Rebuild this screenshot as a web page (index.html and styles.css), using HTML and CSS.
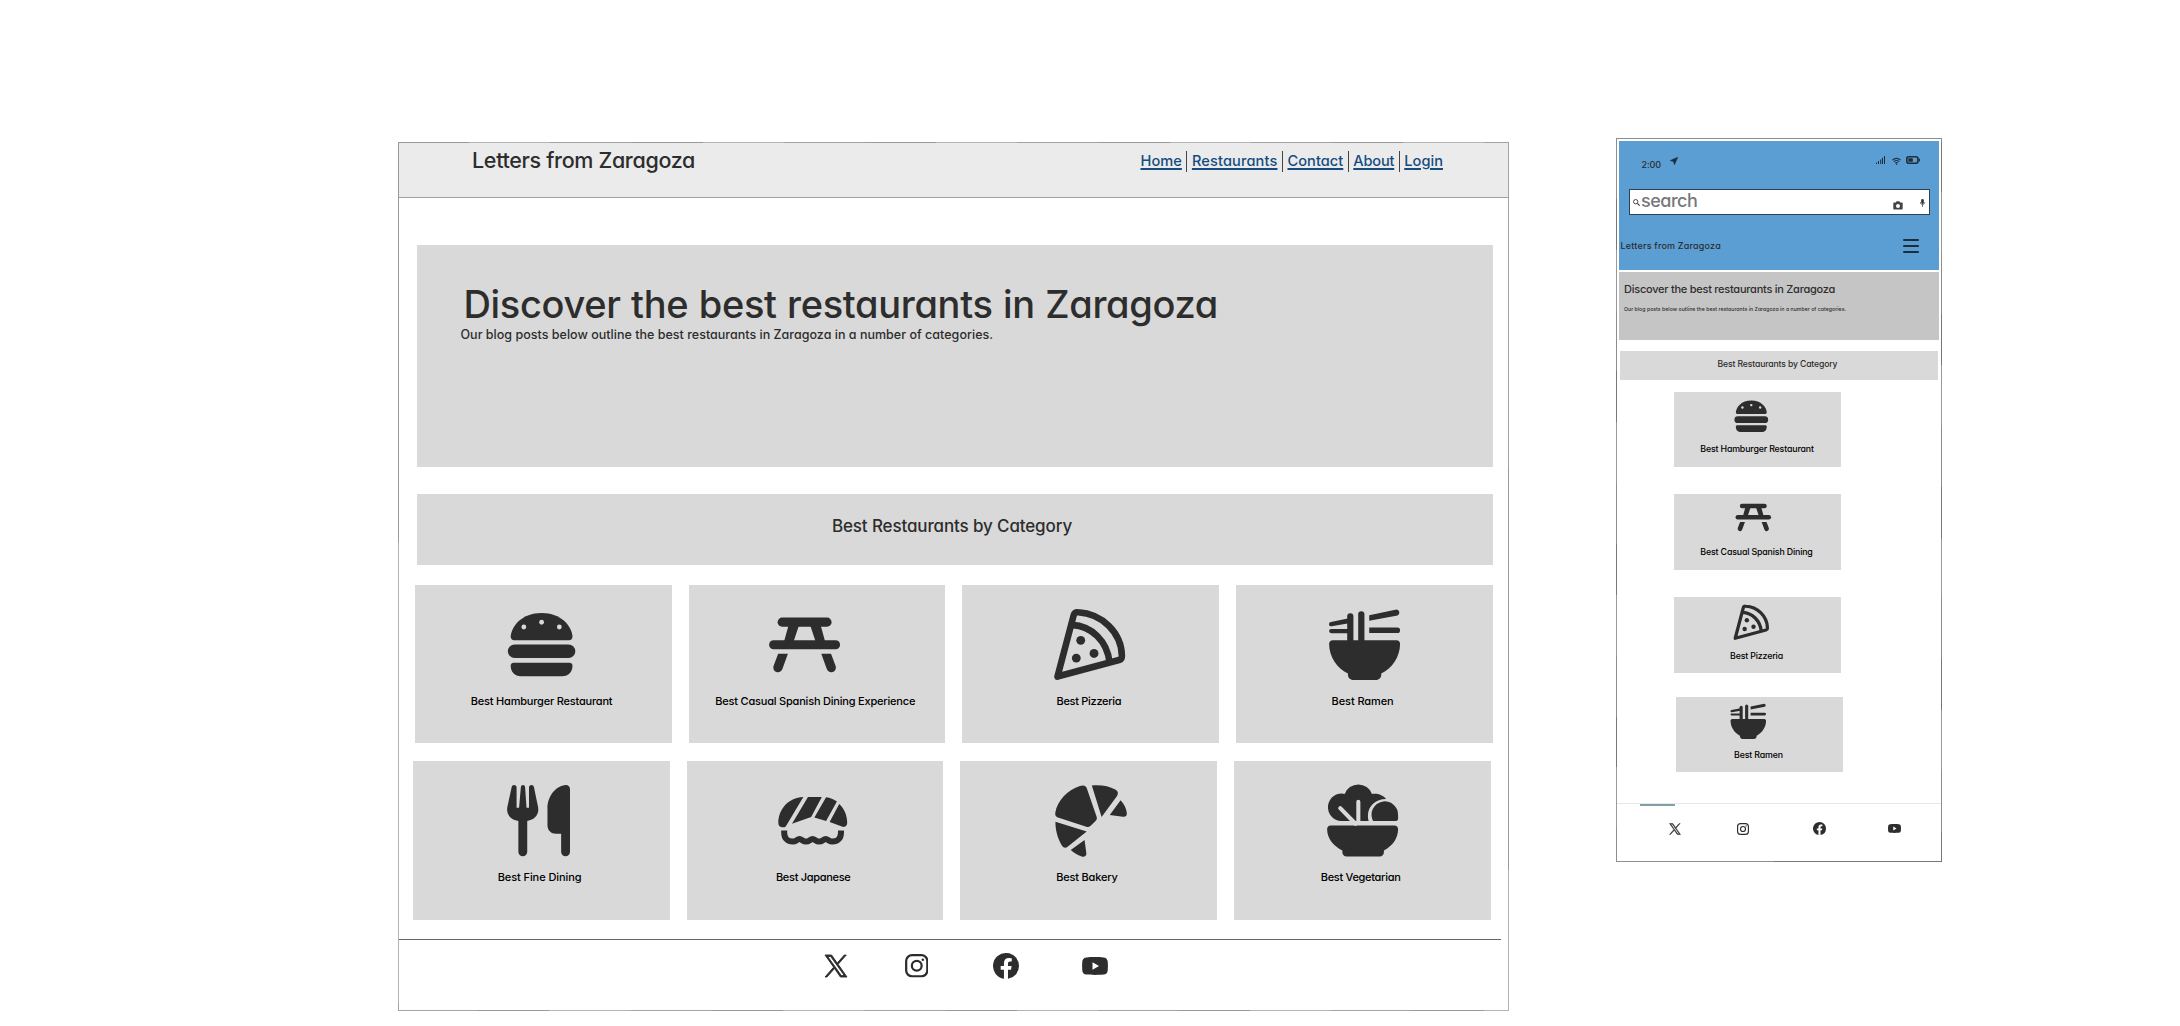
FILE: index.html
```html
<!DOCTYPE html>
<html lang="en">
<head>
<meta charset="utf-8">
<title>Letters from Zaragoza</title>
<link rel="stylesheet" href="styles.css">
</head>
<body>
<svg class="sprite" xmlns="http://www.w3.org/2000/svg">
  <symbol id="burger" viewBox="0 0 24 24">
    <path d="M12 3.1C6.5 3.1 3.5 6.8 3.3 9.7c0 .6.4 1.05.95 1.05h15.5c.55 0 .95-.45.95-1.05C20.5 6.8 17.5 3.1 12 3.1z"/>
    <rect x="2.5" y="12" width="19" height="3.8" rx="1.9"/>
    <path d="M4.1 17.1h15.8c.45 0 .8.35.8.8 0 1.9-1.1 3-2.9 3H6.2c-1.8 0-2.9-1.1-2.9-3 0-.45.35-.8.8-.8z"/>
    <g fill="#d9d9d9"><circle cx="7" cy="7.05" r=".68"/><circle cx="12" cy="5.7" r=".68"/><circle cx="17" cy="7.05" r=".68"/></g>
  </symbol>
  <symbol id="table" viewBox="0 0 24 24">
    <rect x="4.4" y="4.4" width="15.2" height="2.55" rx="1.27"/>
    <rect x="2" y="10.75" width="20" height="2.55" rx="1.27"/>
    <path d="M7.5 6.5h2.95L8.95 11h-2.7zM16.5 6.5h-2.95L15.05 11h2.7z"/>
    <path d="M4.55 14.6h2.75L5.75 18.9a1.3 1.3 0 0 1-2.5-.85zM19.45 14.6H16.7l1.55 4.3a1.3 1.3 0 0 0 2.5-.85z"/>
  </symbol>
  <symbol id="pizza" viewBox="0 0 24 24">
    <g fill="none" stroke="#2d2d2d" stroke-width="1.85" stroke-linejoin="round">
      <path d="M2.95 21L7.55 3.6c.2-.6.6-.75 1.2-.7C15.5 3.3 21 8.6 21.1 15.2c0 .6-.2.95-.8 1.15z"/>
      <path d="M7 6.45c5.6.3 10 4.6 10.6 10.5"/>
    </g>
    <circle cx="9.5" cy="10.8" r="1.25"/><circle cx="8.25" cy="15.8" r="1.25"/><circle cx="13.25" cy="14.5" r="1.25"/>
  </symbol>
  <symbol id="ramen" viewBox="0 0 24 24">
    <path d="M3 10.75h18c.55 0 1 .45 1 1 0 3.6-2.2 6.9-5.3 8.4v.3c0 .9-.65 1.55-1.5 1.55H8.8c-.85 0-1.5-.65-1.5-1.55v-.3C4.2 18.65 2 15.35 2 11.75c0-.55.45-1 1-1z"/>
    <rect x="7.1" y="3.2" width="1.75" height="8.5" rx=".87"/><rect x="10.2" y="2.6" width="1.75" height="9" rx=".87"/>
    <path d="M13.3 3.7l7.7-1.6a.9.9 0 0 1 .3 1.7l-8 1.5zM13.3 7.15h7.9a.8.8 0 0 1 0 1.6h-7.9z"/>
    <path d="M7.6 4.6l-5.1 1a.62.62 0 0 0 .2 1.25l4.9-.85zM7.6 7.6h-5a.6.6 0 0 0 0 1.2h5z"/>
  </symbol>
  <symbol id="cutlery" viewBox="0 0 24 24">
    <path d="M5.1 2c.4 0 .7.3.7.7v5.7h.7L7 2.6c.03-.35.28-.6.6-.6s.57.25.6.6l.4 5.8h.7V2.7c0-.4.3-.7.7-.7.35 0 .6.2.7.6l1.15 5.6c.4 2-.9 3.6-3.05 3.9v8.7a1.25 1.25 0 0 1-2.5 0v-8.7C4.1 11.8 2.8 10.2 3.2 8.2L4.4 2.6c.1-.4.35-.6.7-.6z"/>
    <path d="M20.85 3.2c0-.8-.55-1.3-1.35-1.2-3 .4-5 3.5-5 6.6v4.7c0 1.4 1 2.4 2.4 2.4h1.45v5.1a1.25 1.25 0 0 0 2.5 0z"/>
  </symbol>
  <symbol id="sushi" viewBox="0 0 24 24">
    <path d="M9.4 5.35C5 5.6 2.35 8.9 2.35 12.7c0 .7.4 1.15 1 1.15h.5c.4 0 .6-.2.75-.5z"/>
    <path d="M10.7 5.35h3.9L11.6 11l-5.4 1.9zM15.8 5.4c1.1.15 2.2.6 3.05 1.2L15.8 12.1l-3.3-1zM19.5 7.3c1.4 1.3 2.25 3.2 2.25 5.3 0 .8-.5 1.3-1.3 1.15L16.8 12.4z"/>
    <path fill="none" stroke="#2d2d2d" stroke-width="1.7" d="M4 14.8v.6C4 17 5 17.9 6.4 17.9c1 0 1.2-.7 1.9-.7s.9.7 1.85.7 1.15-.7 1.85-.7.9.7 1.85.7 1.15-.7 1.85-.7.9.7 1.9.7c1.4 0 2.4-.9 2.4-2.5v-.6"/>
  </symbol>
  <symbol id="croissant" viewBox="0 0 24 24">
    <path d="M8.8 2.3C5.6 3.4 2.6 6.3 2.05 9.8c-.1.7.15 1.1.75 1.3l8 2.6c.6.2.9.1 1.3-.3l1.3-1.3c.35-.35.45-.7.3-1.2L11 3.1c-.2-.9-.9-1.2-2.2-.8z"/>
    <path d="M12.35 2.1c2.4-.25 4.8.1 6.6 1.15.8.45.95 1.1.5 1.8L15.1 11zM20.45 6.3c1 1.1 1.6 2.3 1.75 3.5.1.8-.3 1.2-1.1 1.1l-3.7-.5zM2.1 12.3l8.8 2.8-5.3 4.2c-.6.5-1.2.45-1.65-.2C2.7 17 2.05 14.6 2.1 12.3zM10.3 17.5l.5 3.7c.1.7-.5 1.1-1.3.9-1.2-.3-2.2-1-3.1-1.8z"/>
  </symbol>
  <symbol id="salad" viewBox="0 0 24 24">
    <path d="M6 12.1a3.85 3.85 0 1 1 .95-7.6 4.1 4.1 0 0 1 7.7 0c1.7-.2 3.2.4 3.95 1.4-2.9 0-5.1 2-5.1 4.7 0 .6.05 1 .2 1.5z"/>
    <path d="M14.95 12.1a3.75 3.75 0 1 1 7.05-1.5v.9c0 .35-.25.6-.6.6z"/>
    <path d="M3 13.4h18c.55 0 1 .45 1 1 0 2.6-1.6 4.9-4 6v.5c0 .7-.5 1.2-1.2 1.2H7.5c-.7 0-1.2-.5-1.2-1.2v-.5C3.8 19.3 2 17 2 14.4c0-.55.45-1 1-1z"/>
    <path fill="none" stroke="#d9d9d9" stroke-width="1.15" stroke-linecap="round" d="M10.8 6.7v6M5.7 8.5l4.3 4.4"/>
  </symbol>
  <symbol id="x" viewBox="0 0 24 24">
    <path stroke="#2d2d2d" stroke-width=".9" d="M14.1 10.3L22.3 1h-2l-7.1 8.1L7.6 1H1l8.6 12.2L1 23h2l7.5-8.5L16.4 23H23zM3.7 2.5h3l13.6 19h-3z"/>
  </symbol>
  <symbol id="instagram" viewBox="0 0 24 24">
    <g fill="none" stroke="#2d2d2d" stroke-width="2.3"><rect x="1.2" y="1.2" width="21.6" height="21.6" rx="6"/><circle cx="12" cy="12" r="5"/></g><circle cx="18.2" cy="5.8" r="1.3"/>
  </symbol>
  <symbol id="facebook" viewBox="0 0 24 24">
    <path d="M24 12a12 12 0 1 0-13.9 11.85v-8.4h-3V12h3V9.4c0-3 1.8-4.7 4.5-4.7 1.3 0 2.7.25 2.7.25V7.9h-1.5c-1.5 0-1.95.9-1.95 1.85V12h3.3l-.5 3.45h-2.8v8.4A12 12 0 0 0 24 12z"/>
  </symbol>
  <symbol id="youtube" viewBox="0 0 26 18">
    <path fill-rule="evenodd" d="M4.5.4C9 0 17 0 21.5.4 24 .6 25.5 2 25.7 4.5c.3 3 .3 6 0 9-.2 2.5-1.7 3.9-4.2 4.100-4.500.4-12.500.4-17 0C2 17.400.5 16 .3 13.500c-.3-3-.3-6 0-9C.5 2 2 .6 4.500.4zM10.500 5.200v7.600L17 9z"/>
  </symbol>
</svg>

<main class="board">
  <section class="desktop">
    <header class="site-header">
      <div class="brand">Letters from Zaragoza</div>
      <nav class="nav">
        <a href="#">Home</a><i class="sep"></i><a href="#">Restaurants</a><i class="sep"></i><a href="#">Contact</a><i class="sep"></i><a href="#">About</a><i class="sep"></i><a href="#">Login</a>
      </nav>
    </header>
    <div class="hero">
      <h1>Discover the best restaurants in Zaragoza</h1>
      <p>Our blog posts below outline the best restaurants in Zaragoza in a number of categories.</p>
    </div>
    <h2 class="category">Best Restaurants by Category</h2>
    <div class="cards">
      <article class="card"><svg class="icon shift-1"><use href="#burger"/></svg><span>Best Hamburger Restaurant</span></article>
      <article class="card"><svg class="icon shift-12"><use href="#table"/></svg><span>Best Casual Spanish Dining Experience</span></article>
      <article class="card"><svg class="icon shift-1"><use href="#pizza"/></svg><span class="tight">Best Pizzeria</span></article>
      <article class="card"><svg class="icon"><use href="#ramen"/></svg><span class="wide">Best Ramen</span></article>
    </div>
    <div class="cards second">
      <article class="card"><svg class="icon shift-3"><use href="#cutlery"/></svg><span class="wide">Best Fine Dining</span></article>
      <article class="card"><svg class="icon shift-2"><use href="#sushi"/></svg><span class="tight">Best Japanese</span></article>
      <article class="card"><svg class="icon right-2"><use href="#croissant"/></svg><span>Best Bakery</span></article>
      <article class="card"><svg class="icon"><use href="#salad"/></svg><span class="tight">Best Vegetarian</span></article>
    </div>
    <footer class="social">
      <svg class="s-x"><use href="#x"/></svg><svg class="s-ig"><use href="#instagram"/></svg><svg class="s-fb"><use href="#facebook"/></svg><svg class="s-yt"><use href="#youtube"/></svg>
    </footer>
  </section>

  <section class="phone">
    <header class="phone-top">
      <div class="status">
        <span class="time">2:00</span>
        <svg class="arrow" viewBox="0 0 8 8"><path stroke="#1f2d39" stroke-width=".5" d="M7.8.2L.2 3.600l3.300.8.9 3.400z"/></svg>
        <svg class="signal" viewBox="0 0 9 8"><path d="M0 6.500h1V8H0zM2 5h1v3H2zM4.200 3.500h1V8h-1zM6 1.800h1V8H6zM8 0h1v8H8z"/></svg>
        <svg class="wifi" viewBox="0 0 9 8"><path fill="none" stroke="#1f3547" stroke-width="1.100" d="M.4 3.200c2.400-2.400 5.800-2.400 8.200 0M1.800 4.800c1.600-1.500 3.800-1.500 5.400 0M3.200 6.200c.8-.7 1.800-.7 2.600 0"/><circle cx="4.500" cy="7.200" r=".7"/></svg>
        <svg class="battery" viewBox="0 0 14 8"><rect x=".8" y=".8" width="11.100" height="6.400" rx="2" fill="none" stroke="#1f2d39" stroke-width="1.600"/><rect x="2.300" y="2.300" width="4.500" height="3.400" rx=".5"/><rect x="12.700" y="2.600" width="1.200" height="2.800" rx=".5"/></svg>
      </div>
      <div class="search">
        <svg class="glass" viewBox="0 0 8 8"><circle cx="3.100" cy="3.100" r="2.500" fill="none" stroke="#333" stroke-width="1"/><path stroke="#333" stroke-width="1.200" d="M5 5l2.600 2.600"/></svg>
        <span>search</span>
        <svg class="camera" viewBox="0 0 10 9"><path fill-rule="evenodd" d="M1.300 1.600h1.500L3.600.3h2.800l.8 1.300h1.500c.6 0 1 .4 1 1v5c0 .6-.4 1-1 1H1.300c-.6 0-1-.4-1-1v-5c0-.6.4-1 1-1zM5 3.100a2 2 0 1 0 0 4 2 2 0 0 0 0-4z"/></svg>
        <svg class="mic" viewBox="0 0 5 8"><rect x="1.200" y="0" width="2.600" height="4.900" rx="1.300"/><path fill="none" stroke="#333" stroke-width=".7" d="M.4 3.200c0 3.200 4.200 3.200 4.200 0M2.500 5.500V8"/></svg>
      </div>
      <div class="bar">
        <span>Letters from Zaragoza</span>
        <div class="menu"><i></i><i></i><i></i></div>
      </div>
    </header>
    <div class="phone-hero">
      <h3>Discover the best restaurants in Zaragoza</h3>
      <p>Our blog posts below outline the best restaurants in Zaragoza in a number of categories.</p>
    </div>
    <h4 class="phone-category">Best Restaurants by Category</h4>
    <div class="tiles">
      <article class="tile t1"><svg class="small"><use href="#burger"/></svg><span>Best Hamburger Restaurant</span></article>
      <article class="tile t2"><svg class="small"><use href="#table"/></svg><span>Best Casual Spanish Dining</span></article>
      <article class="tile t3"><svg class="small"><use href="#pizza"/></svg><span>Best Pizzeria</span></article>
      <article class="tile t4"><svg class="small"><use href="#ramen"/></svg><span>Best Ramen</span></article>
    </div>
    <footer class="phone-social">
      <i class="mark"></i>
      <svg class="p-x"><use href="#x"/></svg><svg class="p-ig"><use href="#instagram"/></svg><svg class="p-fb"><use href="#facebook"/></svg><svg class="p-yt"><use href="#youtube"/></svg>
    </footer>
  </section>
</main>
</body>
</html>
```

FILE: styles.css
```css
* { box-sizing: border-box; }
body {
  margin: 0;
  background: #fff;
  color: #2d2d2d;
  font-family: Inter, "Liberation Sans", sans-serif;
  font-feature-settings: "cv11" 1;
  font-weight: 500;
}
h1, h2, h3, h4, p { margin: 0; font-weight: 500; white-space: nowrap; }
svg { display: block; flex: none; fill: #2d2d2d; }
.sprite { position: absolute; width: 0; height: 0; }
.board {
  display: flex;
  align-items: flex-start;
  height: 1026px;
  overflow: hidden;
}

/* Desktop frame */
.desktop {
  width: 1111px;
  height: 869px;
  margin: 142px 0 0 398px;
  border: 1px solid #a3a3a3;
  border-image: repeating-linear-gradient(100deg, #999 0 70px, #b4b4b4 70px 150px, #a3a3a3 150px 230px) 1;
  flex: none;
}
.site-header {
  display: flex;
  justify-content: space-between;
  align-items: flex-start;
  height: 55px;
  padding: 4px 65px 0 73px;
  background: #ebebeb;
  border-bottom: 1px solid #a0a0a0;
}
.brand { font-size: 21.5px; line-height: 26px; letter-spacing: -0.33px; }
.nav { display: flex; gap: 4.5px; margin-top: 4px; font-size: 14.6px; line-height: 20px; letter-spacing: 0.04px; }
.nav a {
  color: #154c80;
  text-decoration: underline;
  text-decoration-thickness: 1.5px;
  text-underline-offset: 2px;
}
.nav a:nth-of-type(2) { letter-spacing: 0.13px; }
.nav a:nth-of-type(4) { letter-spacing: -0.2px; }
.sep { width: 1px; height: 21px; background: #444; }
.hero {
  width: 1076px;
  height: 222px;
  margin: 47px 0 0 18px;
  padding: 36.5px 0 0 43.5px;
  background: #d9d9d9;
}
.hero h1 { margin-left: 3px; font-size: 38px; font-weight: 550; line-height: 44px; letter-spacing: -0.32px; word-spacing: 0.6px; }
.hero p { margin-top: 1px; font-size: 12.5px; line-height: 16px; letter-spacing: 0.02px; }
.category {
  width: 1076px;
  height: 71px;
  margin: 26.5px 0 0 18px;
  padding-right: 6px;
  background: #d9d9d9;
  font-size: 17px;
  line-height: 64px;
  letter-spacing: -0.13px;
  text-align: center;
}
.cards {
  display: grid;
  grid-template-columns: repeat(4, 256.7px);
  column-gap: 17px;
  margin: 20.3px 0 0 16px;
}
.cards.second { margin: 17.6px 0 0 14px; }
.card {
  display: flex;
  flex-direction: column;
  align-items: center;
  height: 158.7px;
  padding-top: 17.2px;
  background: #d9d9d9;
}
.icon { width: 85.2px; height: 85.2px; }
.shift-1 { margin-right: 3px; }
.shift-2 { margin-right: 4.5px; }
.shift-3 { margin-right: 6.5px; }
.shift-12 { margin-right: 25px; }
.right-2 { margin-left: 3.5px; }
.card span {
  margin: 5.5px 3.6px 0 0;
  color: #000;
  font-size: 11px;
  line-height: 16px;
  letter-spacing: -0.2px;
  white-space: nowrap;
}
.card .tight { letter-spacing: -0.3px; }
.card .wide { letter-spacing: -0.08px; }
.social {
  display: flex;
  align-items: center;
  width: 1102px;
  height: 53px;
  margin-top: 19px;
  padding: 0 0 0 424.5px;
  border-top: 1px solid #666;
}
.s-x { width: 24px; height: 24px; }
.s-ig { width: 23.5px; height: 23.5px; margin-left: 57px; }
.s-fb { width: 26px; height: 26px; margin-left: 64.5px; }
.s-yt { width: 26px; height: 18px; margin-left: 63px; }

/* Phone frame */
.phone {
  width: 326px;
  height: 724px;
  margin: 138px 0 0 107px;
  padding-top: 2px;
  border: 1px solid #777;
  border-image: repeating-linear-gradient(170deg, #8d8d8d 0 60px, #777 60px 110px, #999 110px 170px) 1;
  flex: none;
}
.phone-top {
  width: 320px;
  height: 129px;
  margin-left: 2px;
  background: #5b9ed4;
}
.phone-top svg { fill: #1f2d39; }
.status { display: flex; height: 48px; padding-left: 22.5px; }
.time { width: 28px; margin-top: 17.5px; font-size: 9px; line-height: 12px; letter-spacing: -0.15px; }
.arrow { width: 8px; height: 8px; margin-top: 16px; }
.signal { width: 9px; height: 8px; margin: 15px 0 0 198px; }
.wifi { width: 9px; height: 8px; margin: 16px 0 0 7px; }
.battery { width: 14px; height: 8px; margin: 14.5px 0 0 5px; }
.search {
  display: flex;
  width: 301px;
  height: 26px;
  margin-left: 10px;
  padding-left: 2.5px;
  border: 1px solid #2d4355;
  background: #fff;
}
.search .glass { width: 7px; height: 7px; margin-top: 9px; }
.search span {
  width: 252px;
  margin: 0 0 0 1.5px;
  color: #77777c;
  font-size: 18px;
  font-weight: 450;
  line-height: 22px;
  letter-spacing: -0.5px;
}
.search .camera { width: 10px; height: 9px; margin-top: 10.5px; fill: #444; }
.search .mic { width: 5px; height: 8px; margin: 9px 0 0 16.5px; fill: #333; }
.bar { display: flex; justify-content: space-between; padding: 24px 20px 0 1.5px; font-size: 9px; line-height: 14px; letter-spacing: 0.2px; }
.menu { display: flex; flex-direction: column; gap: 4px; }
.menu i { width: 16px; height: 2px; border-radius: 1px; background: #1f2d39; }
.phone-hero {
  width: 320px;
  height: 67.5px;
  margin: 2px 0 0 2px;
  padding: 9px 0 0 5px;
  background: #c5c5c5;
}
.phone-hero h3 { font-size: 11px; line-height: 16px; letter-spacing: -0.25px; }
.phone-hero p { margin-top: 7px; font-size: 5.2px; line-height: 10px; letter-spacing: 0.02px; }
.phone-category {
  width: 318px;
  height: 29px;
  margin: 11.5px 0 0 3px;
  padding-right: 3px;
  background: #d9d9d9;
  font-size: 8.6px;
  line-height: 26px;
  letter-spacing: -0.12px;
  text-align: center;
}
.tiles { display: flex; flex-direction: column; padding-left: 56.5px; }
.tile {
  display: flex;
  flex-direction: column;
  align-items: center;
  width: 167px;
  height: 75.5px;
  background: #d9d9d9;
}
.small { width: 42.6px; height: 42.6px; }
.tile span { color: #000; font-size: 8.8px; line-height: 14px; letter-spacing: -0.15px; white-space: nowrap; }
.t1 { margin-top: 11.5px; padding-top: 3.5px; }
.t1 .small { margin-right: 11px; }
.t1 span { margin: 4.5px 0 0 0; }
.t2 { margin-top: 27px; padding-top: 1.5px; }
.t2 .small { margin-right: 8px; }
.t2 span { margin: 7px 1px 0 0; }
.t3 { margin-top: 27.5px; padding-top: 4px; }
.t3 .small { margin-right: 11px; }
.t3 span { margin: 5px 1px 0 0; }
.t4 { margin: 24px 0 0 2px; padding-top: 3.5px; }
.t4 .small { margin-right: 22px; }
.t4 span { margin: 5px 1px 0 0; }
.phone-social {
  position: relative;
  display: flex;
  align-items: center;
  height: 55px;
  margin-top: 31px;
  padding: 0 0 5px 51.5px;
  border-top: 1px solid #e6e8e8;
}
.mark { position: absolute; left: 23px; top: 0; width: 35px; height: 1.5px; background: #809fa8; }
.p-x { width: 12px; height: 12px; }
.p-ig { width: 12px; height: 12px; margin-left: 56.5px; }
.p-fb { width: 13px; height: 13px; margin-left: 63.5px; }
.p-yt { width: 13px; height: 9px; margin-left: 62.5px; }
```
